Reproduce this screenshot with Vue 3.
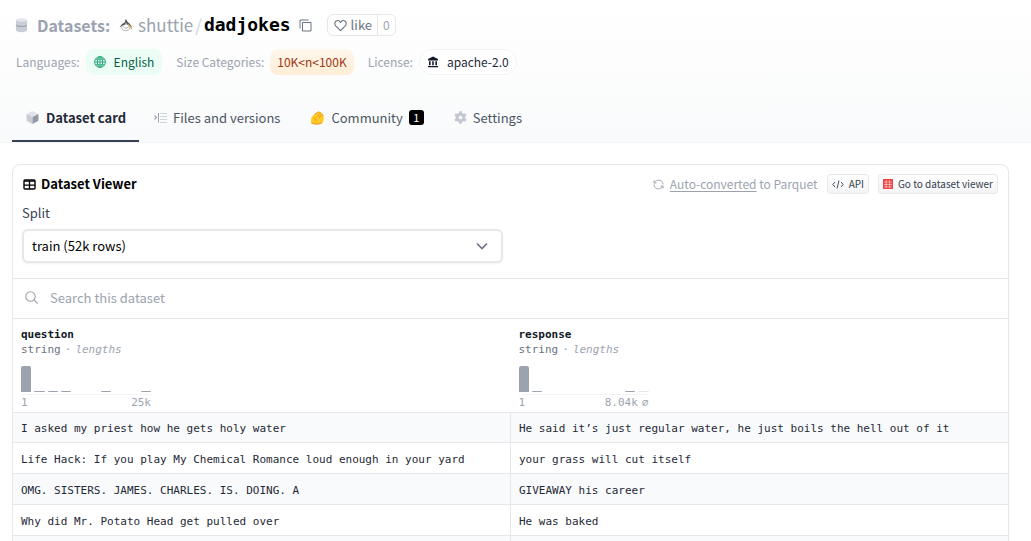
<script setup>
import { ref } from 'vue'

const split = ref('train')
const search = ref('')

const columns = [
  {
    name: 'question',
    bars: [26, 1, 1, 1, 0, 0, 1, 0, 0, 1],
    max: '25k',
    hasNull: false
  },
  {
    name: 'response',
    bars: [26, 1, 0, 0, 0, 0, 0, 0, 1],
    max: '8.04k',
    hasNull: true
  }
]

const rows = [
  ['I asked my priest how he gets holy water', 'He said it’s just regular water, he just boils the hell out of it'],
  ['Life Hack: If you play My Chemical Romance loud enough in your yard', 'your grass will cut itself'],
  ['OMG. SISTERS. JAMES. CHARLES. IS. DOING. A', 'GIVEAWAY his career'],
  ['Why did Mr. Potato Head get pulled over', 'He was baked'],
  ['', '']
]
</script>

<template>
  <div class="page">
    <header class="top">
      <h1 class="title">
        <svg class="db" viewBox="0 0 14 16" aria-hidden="true">
          <path d="M1 2.5h12v11c0 1.4-2.4 2.2-6 2.2s-6-.8-6-2.2z" fill="#c9cdd5" />
          <ellipse cx="7" cy="2.6" rx="6" ry="2" fill="#e3e5ea" />
          <path d="M1 8.2c1 1 3 1.3 6 1.3s5-.3 6-1.3" fill="none" stroke="#8e95a3" />
        </svg>
        <a class="kind" href="#datasets">Datasets:</a>
        <svg class="avatar" viewBox="0 0 14 14" aria-hidden="true">
          <path d="M6 1.500 7.500 1.800 8.600 4l2.200 1.800 2.500 4-3.600-2.600-2.600-.9-2.700 1L.500 9.400 3 6l2.300-1.200 1-1.500z" fill="#55565c" />
          <path d="m9 6.300 4 4.700" stroke="#e0ab6c" stroke-width="1.200" />
          <path d="M3.200 7.800C1.800 9.600 2.800 12.500 6.800 12.600c2.600 0 4-1.300 3.800-3.400M4.200 8.500l2.800 2 2.800-1.900" fill="none" stroke="#b5b5b8" stroke-width="1" />
          <path d="M7 4.800v2.200" stroke="#fff" stroke-width=".8" />
        </svg>
        <a class="owner" href="#shuttie">shuttie</a>
        <span class="slash">/</span>
        <a class="repo" href="#dadjokes">dadjokes</a>
        <button class="copy" type="button" aria-label="Copy dataset name">
          <svg viewBox="0 0 13 13" fill="none" stroke="#6b7280">
            <path d="M3.500 3.500h8.500v8.500h-8.500zM1 9.500V1h8.500" />
          </svg>
        </button>
        <span class="like">
          <button type="button">
            <svg viewBox="0 0 13 13" fill="none" stroke="#6b7280" stroke-width="1.1" aria-hidden="true">
              <path d="M6.500 11.700 1.700 6.800C.4 5.400.6 3.300 1.900 2.300c1.300-1 3.100-.7 4.100.5l.5.6.5-.6c1-1.200 2.800-1.500 4.100-.5 1.300 1 1.500 3.100.2 4.500z" />
            </svg>
            like
          </button>
          <a href="#likes">0</a>
        </span>
      </h1>

      <div class="tags">
        <span class="label">Languages:</span>
        <a class="tag english" href="#en">
          <svg viewBox="0 0 12 12" fill="none" stroke="#2aa878" aria-hidden="true">
            <circle cx="6" cy="6" r="5.400" />
            <ellipse cx="6" cy="6" rx="2.600" ry="5.400" />
            <path d="M6 .6v10.800M.6 6h10.800M1.400 3.200h9.200M1.400 8.800h9.200" />
          </svg>
          English
        </a>
        <span class="label">Size Categories:</span>
        <a class="tag size" href="#size">10K&lt;n&lt;100K</a>
        <span class="label">License:</span>
        <a class="tag license" href="#license">
          <svg viewBox="0 0 12 12" fill="#111827" aria-hidden="true">
            <path d="M6 .5 11 3v1.500H1V3zM2 5.200h1.600v4H2zM5.200 5.200h1.600v4H5.200zM8.400 5.200H10v4H8.400zM1 9.900h10v1.400H1z" />
          </svg>
          apache-2.0
        </a>
      </div>

      <nav class="tabs">
        <a class="tab active" href="#card">
          <svg viewBox="0 0 12 12" aria-hidden="true">
            <path d="M6 0 11.500 2.700 6 5.600.5 2.700z" fill="#e1e3e8" />
            <path d="M.5 2.700 6 5.600V12L.5 9.100z" fill="#c8ccd4" />
            <path d="M11.500 2.700 6 5.600V12l5.500-2.900z" fill="#9299a7" />
          </svg>
          Dataset card
        </a>
        <a class="tab files" href="#files">
          <svg viewBox="0 0 13 13" fill="none" aria-hidden="true">
            <path d="m.5 4.500 2 2-2 2" stroke="#a0a6b2" stroke-width="1.200" />
            <path d="M4.500 2v9.500" stroke="#9ca3af" />
            <path d="M6 2.500h7M6 5.500h7M6 8.500h7M6 11.500h7" stroke="#d1d5db" />
          </svg>
          Files and versions
        </a>
        <a class="tab community" href="#community">
          <svg viewBox="0 0 15 14" aria-hidden="true">
            <path d="M1 9.200C.8 6.600 2.400 4.600 4.500 3.500L8 .8c.8-.5 1.600 0 1.400.8 1-.8 2-.2 1.700.7 1-.4 1.700.3 1.400 1.200.9.100 1.100.8.800 1.500 1 2.700.6 5.800-1.500 7.300-2 1.300-8 1.500-9.900.5C.800 12.200 1 10.700 1 9.200z" fill="#ffca28" />
            <path d="m4.500 3.500 4.200-2.700 1 .9 1.500.7 1.200 1.200.9 1.500M7.200 6.200 9.600 3M9.200 7l2-3M3.600 6.700c1.400.500 2.500 1.700 2.600 3.300M1.600 11.900c2.300 1.500 8 1.500 10.300.2" fill="none" stroke="#f7931e" stroke-width="1" />
          </svg>
          Community
          <span class="count">1</span>
        </a>
        <a class="tab settings" href="#settings">
          <svg viewBox="0 0 12 12" fill="none" aria-hidden="true">
            <circle cx="6" cy="6" r="3.100" stroke="#c3c7d0" stroke-width="2.800" />
            <path d="M6 .3v2M6 9.700v2M1 3.100l1.800 1M9.200 7.900l1.800 1M1 8.900l1.800-1M9.200 4.100l1.800-1" stroke="#c3c7d0" stroke-width="2.600" />
          </svg>
          Settings
        </a>
      </nav>
    </header>

    <main class="viewer">
      <div class="bar">
        <svg class="grid-icon" viewBox="0 0 13 11" aria-hidden="true">
          <rect x="1" y="1" width="11" height="9" rx="1" fill="none" stroke="#000" stroke-width="1.400" />
          <path d="M1 2.200h11M1 6.200h11M6.500 2v8" stroke="#000" stroke-width="1.300" />
        </svg>
        <h2>Dataset Viewer</h2>
        <p class="converted">
          <svg viewBox="0 0 11 11" fill="none" stroke="#9ca3af" aria-hidden="true">
            <path d="M1 1.500V4h2.500M1.300 3.800C2.500 1.200 6.500.2 8.800 2.500 9.600 3.300 10 4.200 10 5.500M10 9.500V7H7.500M9.700 7.200C8.500 9.800 4.500 10.800 2.200 8.500 1.400 7.700 1 6.800 1 5.500" />
          </svg>
          <span><a href="#parquet">Auto-converted</a> to Parquet</span>
        </p>
        <button class="small" type="button">
          <svg class="code" viewBox="0 0 12 9" fill="none" stroke="#4b5563" aria-hidden="true">
            <path d="M3 2 .8 4.500 3 7M9 2l2.200 2.500L9 7M7 .5l-2 8" />
          </svg>
          API
        </button>
        <a class="small" href="#viewer">
          <svg class="red" viewBox="0 0 10 10" aria-hidden="true">
            <path d="M0 0h10v10H0z" fill="#ef4444" />
            <path d="M1 3h8M1 5.500h8M1 8h8M3.200 1v8M6.500 1v8" stroke="#fecaca" stroke-width=".7" />
          </svg>
          Go to dataset viewer
        </a>
      </div>

      <div class="split">
        <label for="split">Split</label>
        <div class="select">
          <select id="split" v-model="split">
            <option value="train">train (52k rows)</option>
          </select>
          <svg viewBox="0 0 12 8" fill="none" stroke="#6b7280" stroke-width="1.600" aria-hidden="true">
            <path d="m1 1.500 5 5 5-5" />
          </svg>
        </div>
      </div>

      <label class="search">
        <svg viewBox="0 0 13 13" fill="none" stroke="#9ca3af" stroke-width="1.100" aria-hidden="true">
          <circle cx="5.500" cy="5.500" r="4.700" />
          <path d="m9 9 3.600 3.600" />
        </svg>
        <input v-model="search" type="text" placeholder="Search this dataset" aria-label="Search this dataset" />
      </label>

      <table>
        <thead>
          <tr>
            <th v-for="col in columns" :key="col.name" scope="col">
              <div class="name">{{ col.name }}</div>
              <div class="type">string<span>·</span><i>lengths</i></div>
              <div class="chart">
                <span v-for="(h, i) in col.bars" :key="i" :style="{ height: h + 'px' }"></span>
                <span v-if="col.hasNull" class="null"></span>
              </div>
              <div class="axis">
                <span>1</span>
                <span class="max">{{ col.max }}</span>
                <span v-if="col.hasNull">⌀</span>
              </div>
            </th>
          </tr>
        </thead>
        <tbody>
          <tr v-for="(row, i) in rows" :key="i">
            <td v-for="(cell, j) in row" :key="j">{{ cell }}</td>
          </tr>
        </tbody>
      </table>
    </main>
  </div>
</template>

<style>
body {
  margin: 0;
  background: #fff;
}
</style>

<style scoped>
* {
  box-sizing: border-box;
}

.page {
  height: 100vh;
  overflow: hidden;
  color: #4b5563;
  font: 13px/20px "Noto Sans CJK SC", "Noto Sans", sans-serif;
}

a {
  color: inherit;
  text-decoration: none;
}

button,
input,
select {
  margin: 0;
  padding: 0;
  border: 0;
  background: none;
  color: inherit;
  font: inherit;
}

svg {
  display: block;
  flex: none;
}

.top {
  padding: 12px 12px 0;
  border-bottom: 1px solid #f3f4f6;
  background: linear-gradient(#fff, #f9fafb);
}

.title {
  display: flex;
  align-items: center;
  height: 26px;
  margin: 0;
  padding-left: 3px;
  font-size: 17px;
  font-weight: 400;
  color: #9ca3af;
}

.db {
  width: 13px;
  height: 16px;
}

.kind {
  margin: 0 9px;
  font-size: 16px;
  font-weight: 700;
}

.avatar {
  width: 14px;
  height: 14px;
}

.owner {
  margin-left: 5px;
}

.slash {
  margin: 0 2px;
  color: #d1d5db;
}

.repo {
  color: #000;
  font: bold 18px/26px "DejaVu Sans Mono", monospace;
}

.copy {
  margin: 0 15px 0 8px;
}

.copy svg {
  width: 13px;
  height: 13px;
}

.like {
  display: flex;
  height: 22px;
  border: 1px solid #e5e7eb;
  border-radius: 6px;
  background: #fff;
  font-size: 13px;
  line-height: 20px;
}

.like button {
  display: flex;
  align-items: center;
  gap: 4px;
  padding: 0 5px 0 6px;
  color: #6b7280;
}

.like svg {
  width: 13px;
  height: 13px;
}

.like a {
  padding: 0 5px;
  border-left: 1px solid #e5e7eb;
  font-size: 12px;
}

.tags {
  display: flex;
  align-items: center;
  margin-top: 11px;
  padding-left: 4px;
  font-size: 12px;
}

.label {
  margin-right: 6px;
  color: #9ca3af;
}

.tag {
  display: flex;
  align-items: center;
  gap: 8px;
  height: 26px;
  margin-right: 14px;
  padding: 0 8px;
  border-radius: 8px;
}

.tag svg {
  width: 12px;
  height: 12px;
}

.english {
  background: #ecfdf5;
  color: #065f46;
}

.size {
  padding: 0 7px;
  background: linear-gradient(#fff7ed, #ffedd5);
  color: #9a3412;
}

.license {
  padding: 0 7px;
  border: 1px solid #f3f4f6;
  border-radius: 13px;
  background: #fff;
  color: #1f2937;
}

.tabs {
  display: flex;
  height: 49px;
  margin-top: 18px;
}

.tab {
  display: flex;
  align-items: center;
  gap: 6px;
  padding: 0 15px;
  color: #4b5563;
  white-space: nowrap;
}

.tab svg {
  width: 13px;
  height: 13px;
}

.active {
  gap: 7px;
  padding: 2px 13px 0 14px;
  border-bottom: 2px solid #374151;
  color: #1f2937;
  font-weight: 700;
}

.community svg {
  width: 15px;
  height: 14px;
}

.count {
  width: 15px;
  height: 15px;
  border-radius: 3px;
  background: #000;
  color: #fff;
  font-size: 11px;
  line-height: 15px;
  text-align: center;
}

.viewer {
  margin: 21px 22px 0 12px;
  border: 1px solid #e5e7eb;
  border-radius: 8px 8px 0 0;
}

.bar {
  display: flex;
  align-items: center;
  height: 38px;
  padding: 0 10px;
}

.grid-icon {
  width: 13px;
  height: 11px;
}

h2 {
  margin: 0 auto 0 5px;
  color: #000;
  font-size: 13px;
  font-weight: 700;
}

.converted {
  display: flex;
  align-items: center;
  gap: 6px;
  margin: 0;
  color: #9ca3af;
  font-size: 12px;
}

.converted svg {
  width: 11px;
  height: 11px;
}

.converted a {
  text-decoration: underline;
  text-underline-offset: 2px;
}

.small {
  display: flex;
  align-items: center;
  gap: 5px;
  height: 20px;
  margin-left: 9px;
  padding: 0 4px;
  border: 1px solid #e5e7eb;
  border-radius: 4px;
  background: linear-gradient(#fff, #f3f4f6);
  color: #374151;
  font-size: 10px;
  line-height: 18px;
}

.code {
  width: 12px;
  height: 9px;
}

.red {
  width: 10px;
  height: 10px;
}

.split {
  padding: 0 9px 15px;
  border-bottom: 1px solid #e5e7eb;
}

.split label {
  display: block;
  height: 26px;
  color: #374151;
}

.select {
  position: relative;
  width: 50%;
  max-width: 481px;
}

select {
  display: block;
  width: 100%;
  height: 34px;
  padding: 0 8px;
  border: 2px solid #e5e7eb;
  border-radius: 6px;
  background: #fff;
  box-shadow: 0 1px 2px #0000000d;
  color: #000;
  appearance: none;
}

.select svg {
  position: absolute;
  top: 13px;
  right: 15px;
  width: 12px;
  height: 8px;
}

.search {
  display: flex;
  align-items: center;
  gap: 12px;
  height: 40px;
  padding: 0 12px 2px;
  border-bottom: 1px solid #e5e7eb;
}

.search svg {
  width: 13px;
  height: 13px;
}

input {
  flex: 1;
  height: 20px;
  outline: 0;
}

input::placeholder {
  color: #9ca3af;
  opacity: 1;
}

table {
  width: 100%;
  border-collapse: collapse;
  table-layout: fixed;
  color: #1f2937;
  font: 11px/15px "DejaVu Sans Mono", monospace;
}

th {
  height: 93px;
  padding: 8px 8px 0;
  font-weight: 400;
  text-align: left;
  vertical-align: top;
}

th:first-child {
  width: calc(50% - 1px);
}

.name {
  color: #111827;
  font-weight: 700;
}

.type {
  display: flex;
  gap: 4px;
  color: #6b7280;
}

.type i,
.type span {
  color: #9ca3af;
}

.chart {
  display: grid;
  grid-template-columns: repeat(10, 1fr);
  column-gap: 3px;
  align-items: end;
  width: 130px;
  height: 29px;
  margin-top: 9px;
  padding-bottom: 2px;
  border-bottom: 1px solid #f3f4f6;
}

.chart span {
  border-radius: 2px 2px 0 0;
  background: #9ca3af;
}

.chart .null {
  height: 1px;
  background: #e5e7eb;
}

.axis {
  display: flex;
  gap: 4px;
  width: 130px;
  color: #9ca3af;
}

.max {
  margin-left: auto;
}

td {
  height: 31px;
  padding: 3px 8px 0;
  border-top: 1px solid #e5e7eb;
  overflow: hidden;
  white-space: nowrap;
}

tbody tr:first-child td {
  height: 30px;
}

td + td {
  border-left: 1px solid #e5e7eb;
}

tbody tr:nth-child(odd) {
  background: #f9fafb;
}
</style>
